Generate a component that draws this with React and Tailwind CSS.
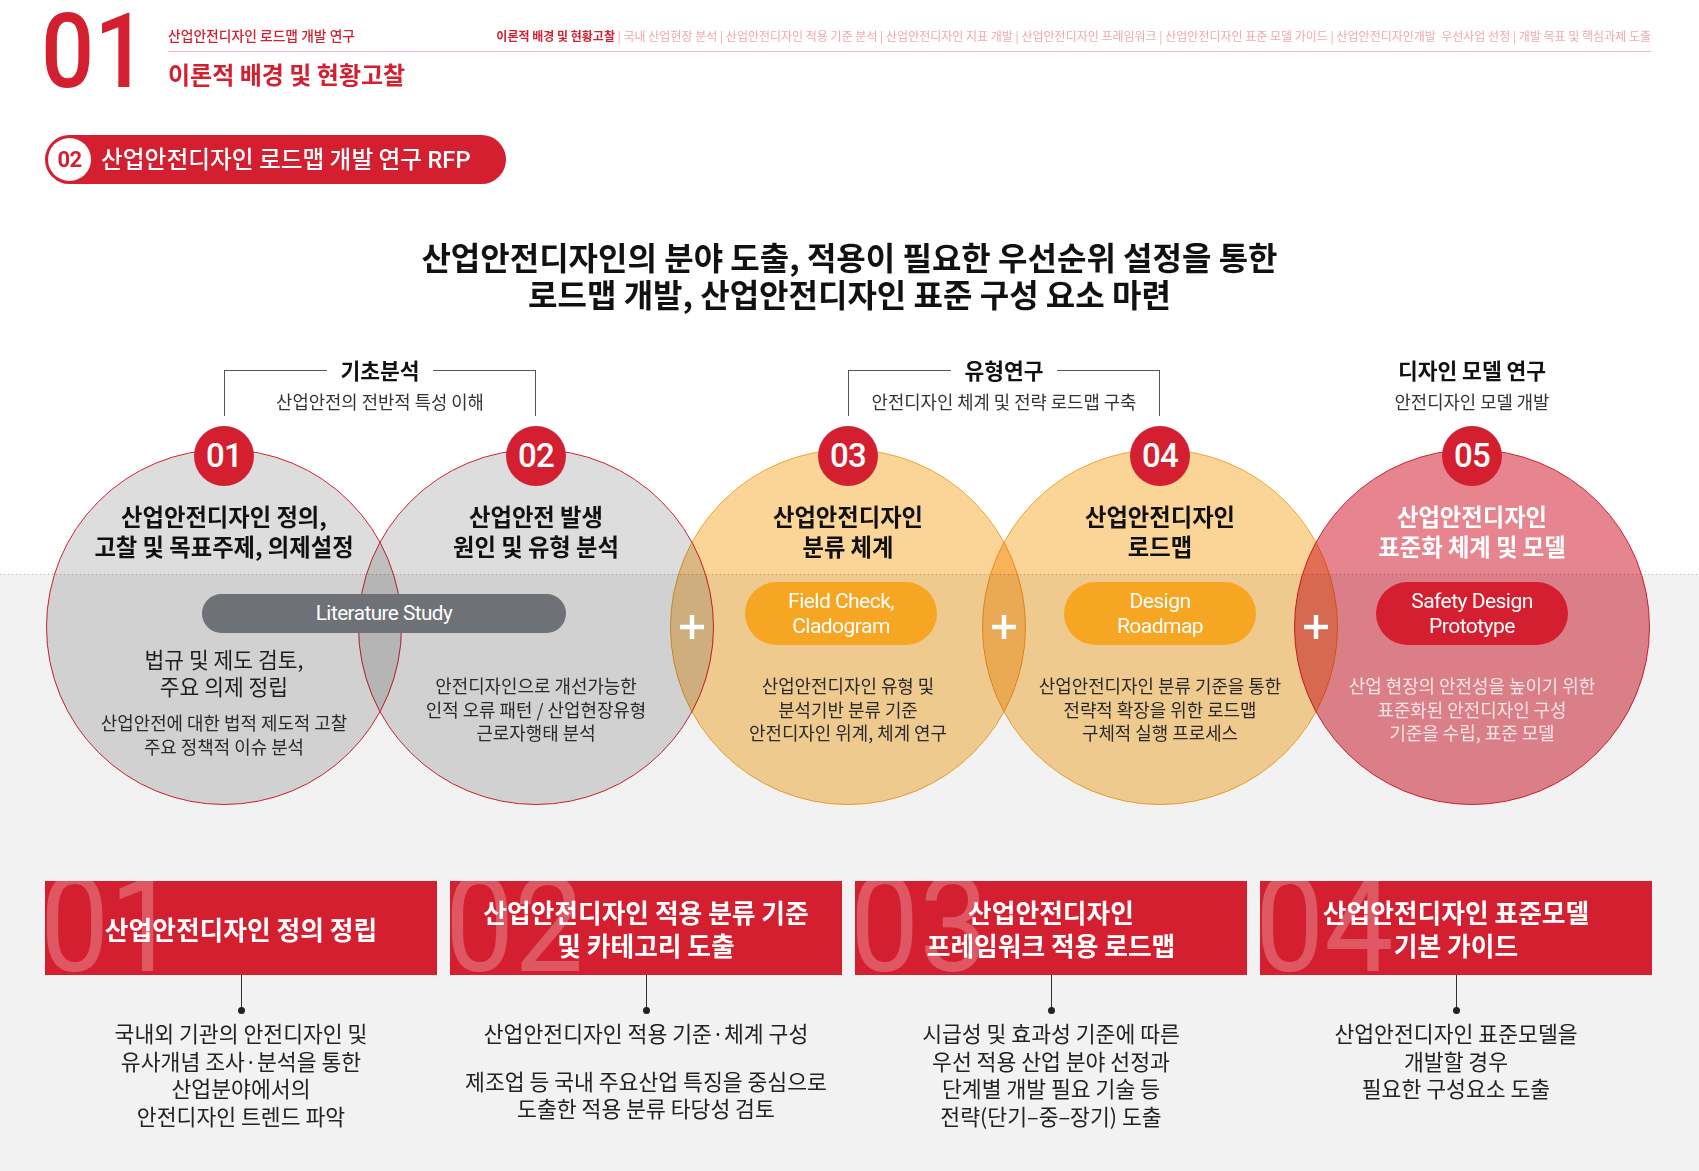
import clsx from "clsx";

const crumbs = [
	"국내 산업현장 분석",
	"산업안전디자인 적용 기준 분석",
	"산업안전디자인 지표 개발",
	"산업안전디자인 프레임워크",
	"산업안전디자인 표준 모델 가이드",
	"산업안전디자인개발  우선사업 선정",
	"개발 목표 및 핵심과제 도출",
];

const Circle = ({ n, tone, first, plus, children }) => {
	return (
		<div
			className={clsx(
				"relative flex h-[356px] w-[356px] shrink-0 flex-col items-center pt-[52px] text-center",
				!first && "-ml-[44px]"
			)}
		>
			<div
				className={clsx(
					"absolute inset-0 rounded-full border mix-blend-multiply",
					tone === "gray" && "border-[#d3202f] bg-[#dddddd]",
					tone === "orange" && "border-[#f2a22c] bg-[#fbd597]",
					tone === "red" && "border-[#d3202f] bg-[#e6858f]"
				)}
			/>
			<div className="absolute -top-[23px] left-1/2 flex h-[60px] w-[60px] -translate-x-1/2 items-center justify-center rounded-full bg-[#d31f2f] font-['Roboto',sans-serif] text-[33px] font-medium tracking-tight text-white">
				{n}
			</div>
			{plus && (
				<svg
					className="absolute left-[22px] top-1/2 -translate-x-1/2 -translate-y-1/2"
					width="26"
					height="26"
					viewBox="0 0 26 26"
				>
					<path d="M13 1v24M1 13h24" stroke="#fff" strokeWidth="4.5" />
				</svg>
			)}
			<div className="relative flex w-full flex-col items-center">{children}</div>
		</div>
	);
};

const Title = ({ light, children }) => (
	<p
		className={clsx(
			"text-[23.3px] font-bold leading-[30px]",
			light ? "text-white" : "text-[#111]"
		)}
	>
		{children}
	</p>
);

const Pill = ({ color, shift, children }) => (
	<div
		className={clsx(
			"flex h-[63px] w-[192px] items-center justify-center rounded-full font-['Roboto',sans-serif] text-[21px] leading-[25px] tracking-tight text-white",
			color,
			shift
		)}
	>
		<p>{children}</p>
	</div>
);

const Body = ({ light, children }) => (
	<p
		className={clsx(
			"mt-[29px] text-[17.9px] leading-[23.5px]",
			light ? "text-[#fde6e9]" : "text-[#2a2a2a]"
		)}
	>
		{children}
	</p>
);

const Group = ({ title, sub, lines }) => (
	<div className={clsx("flex h-[46px] w-[312px] shrink-0 flex-col", lines && "border-x border-[#555]")}>
		<div className="-mt-[12px] flex h-[24px] items-center">
			<span className={clsx("h-px flex-1", lines && "bg-[#555]")} />
			<span className="px-[13px] text-[21.5px] font-bold leading-[24px] text-[#111]">{title}</span>
			<span className={clsx("h-px flex-1", lines && "bg-[#555]")} />
		</div>
		<p className="mt-[8px] whitespace-nowrap text-center text-[17.75px] leading-[22px] text-[#333]">{sub}</p>
	</div>
);

const Card = ({ n, title, children }) => (
	<div className="flex w-[392px] shrink-0 flex-col items-center">
		<div className="relative flex h-[94px] w-full items-center justify-center overflow-hidden bg-[#d31f2f]">
			<span className="absolute -left-[5px] -top-[22px] origin-left scale-x-[0.92] font-['Roboto',sans-serif] text-[134px] leading-none text-white/25">
				{n}
			</span>
			<p className="relative text-center text-[25.75px] font-bold leading-[33px] text-white">{title}</p>
		</div>
		<div className="h-[35px] w-px bg-[#333]" />
		<div className="-mt-[3px] h-[7px] w-[7px] rounded-full bg-[#222]" />
		<div className="mt-[5px] text-center text-[21.6px] leading-[27.7px] text-[#222]">{children}</div>
	</div>
);

const App = () => {
	return (
		<div className="relative h-[1171px] w-[1699px] overflow-hidden bg-[linear-gradient(to_bottom,#ffffff_574px,#f2f2f2_574px)] font-['Noto_Sans_CJK_KR',sans-serif]">
			<div className="absolute inset-x-0 top-[574px] h-px bg-[linear-gradient(to_right,#e59aa1_1px,transparent_1px)] bg-[length:4px_1px]" />

			{/* header */}
			<div className="flex pl-[41px] pr-[48px]">
				<span className="w-[127px] shrink-0 origin-left scale-x-[0.9] font-['Roboto',sans-serif] text-[104px] font-medium leading-none text-[#d31f2f]">
					01
				</span>
				<div className="flex-1">
					<div className="flex h-[52px] items-end justify-between border-b border-[#f4b6bc] pb-[7px]">
						<p className="text-[13.8px] font-medium leading-[18px] text-[#d31f2f]">
							산업안전디자인 로드맵 개발 연구
						</p>
						<p className="whitespace-pre text-[12px] leading-[16px] text-[#f2a7ae]">
							<span className="font-bold text-[#d31f2f]">이론적 배경 및 현황고찰</span>
							{crumbs.map((c) => ` | ${c}`).join("")}
						</p>
					</div>
					<p className="mt-[7px] text-[24px] font-bold leading-[30px] text-[#d31f2f]">
						이론적 배경 및 현황고찰
					</p>
				</div>
			</div>

			{/* RFP badge */}
			<div className="ml-[45px] mt-[31px] flex h-[49px] w-[461px] items-center rounded-full bg-[#d31f2f] pl-[3px]">
				<div className="flex h-[43px] w-[43px] items-center justify-center rounded-full bg-white font-['Roboto',sans-serif] text-[22px] font-bold tracking-tight text-[#d31f2f]">
					02
				</div>
				<p className="ml-[10px] text-[23.7px] font-medium text-white">
					산업안전디자인 로드맵 개발 연구 <span className="font-['Roboto',sans-serif]">RFP</span>
				</p>
			</div>

			{/* headline */}
			<h1 className="mt-[54px] text-center text-[32px] font-bold leading-[37px] text-[#111]">
				산업안전디자인의 분야 도출, 적용이 필요한 우선순위 설정을 통한
				<br />
				로드맵 개발, 산업안전디자인 표준 구성 요소 마련
			</h1>

			{/* group headers */}
			<div className="mt-[58px] flex pl-[224px]">
				<Group title="기초분석" sub="산업안전의 전반적 특성 이해" lines />
				<div className="w-[312px] shrink-0" />
				<Group title="유형연구" sub="안전디자인 체계 및 전략 로드맵 구축" lines />
				<div className="ml-[156px]">
					<Group title="디자인 모델 연구" sub="안전디자인 모델 개발" />
				</div>
			</div>

			{/* venn row */}
			<div className="mt-[33px] flex pl-[46px]">
				<Circle n="01" tone="gray" first>
					<Title>
						산업안전디자인 정의,
						<br />
						고찰 및 목표주제, 의제설정
					</Title>
					<div className="mt-[21px] flex h-[63px] items-center self-stretch">
						<div className="relative z-10 ml-[156px] flex h-[39px] w-[364px] shrink-0 items-center justify-center rounded-full bg-[#6e7277] font-['Roboto',sans-serif] text-[20.7px] tracking-tight text-white">
							Literature Study
						</div>
					</div>
					<p className="text-[21.5px] leading-[27px] text-[#1f1f1f]">
						법규 및 제도 검토,
						<br />
						주요 의제 정립
					</p>
					<p className="mt-[11px] text-[17.9px] leading-[24px] text-[#2a2a2a]">
						산업안전에 대한 법적 제도적 고찰
						<br />
						주요 정책적 이슈 분석
					</p>
				</Circle>

				<Circle n="02" tone="gray">
					<Title>
						산업안전 발생
						<br />
						원인 및 유형 분석
					</Title>
					<div className="mt-[21px] h-[63px]" />
					<Body>
						안전디자인으로 개선가능한
						<br />
						인적 오류 패턴 / 산업현장유형
						<br />
						근로자행태 분석
					</Body>
				</Circle>

				<Circle n="03" tone="orange" plus>
					<Title>
						산업안전디자인
						<br />
						분류 체계
					</Title>
					<div className="mt-[21px]">
						<Pill color="bg-[#f6a623]" shift="-translate-x-[7px]">
							Field Check,
							<br />
							Cladogram
						</Pill>
					</div>
					<Body>
						산업안전디자인 유형 및
						<br />
						분석기반 분류 기준
						<br />
						안전디자인 위계, 체계 연구
					</Body>
				</Circle>

				<Circle n="04" tone="orange" plus>
					<Title>
						산업안전디자인
						<br />
						로드맵
					</Title>
					<div className="mt-[21px]">
						<Pill color="bg-[#f6a623]">
							Design
							<br />
							Roadmap
						</Pill>
					</div>
					<Body>
						산업안전디자인 분류 기준을 통한
						<br />
						전략적 확장을 위한 로드맵
						<br />
						구체적 실행 프로세스
					</Body>
				</Circle>

				<Circle n="05" tone="red" plus>
					<Title light>
						산업안전디자인
						<br />
						표준화 체계 및 모델
					</Title>
					<div className="mt-[21px]">
						<Pill color="bg-[#d31f2f]">
							Safety Design
							<br />
							Prototype
						</Pill>
					</div>
					<Body light>
						산업 현장의 안전성을 높이기 위한
						<br />
						표준화된 안전디자인 구성
						<br />
						기준을 수립, 표준 모델
					</Body>
				</Circle>
			</div>

			{/* result cards */}
			<div className="mt-[76px] flex gap-[13px] pl-[45px]">
				<Card n="01" title="산업안전디자인 정의 정립">
					<p>
						국내외 기관의 안전디자인 및
						<br />
						유사개념 조사·분석을 통한
						<br />
						산업분야에서의
						<br />
						안전디자인 트렌드 파악
					</p>
				</Card>
				<Card
					n="02"
					title={
						<>
							산업안전디자인 적용 분류 기준
							<br />및 카테고리 도출
						</>
					}
				>
					<p>산업안전디자인 적용 기준·체계 구성</p>
					<p className="mt-[20px]">
						제조업 등 국내 주요산업 특징을 중심으로
						<br />
						도출한 적용 분류 타당성 검토
					</p>
				</Card>
				<Card
					n="03"
					title={
						<>
							산업안전디자인
							<br />
							프레임워크 적용 로드맵
						</>
					}
				>
					<p>
						시급성 및 효과성 기준에 따른
						<br />
						우선 적용 산업 분야 선정과
						<br />
						단계별 개발 필요 기술 등
						<br />
						전략(단기–중–장기) 도출
					</p>
				</Card>
				<Card
					n="04"
					title={
						<>
							산업안전디자인 표준모델
							<br />
							기본 가이드
						</>
					}
				>
					<p>
						산업안전디자인 표준모델을
						<br />
						개발할 경우
						<br />
						필요한 구성요소 도출
					</p>
				</Card>
			</div>
		</div>
	);
};

export default App;
